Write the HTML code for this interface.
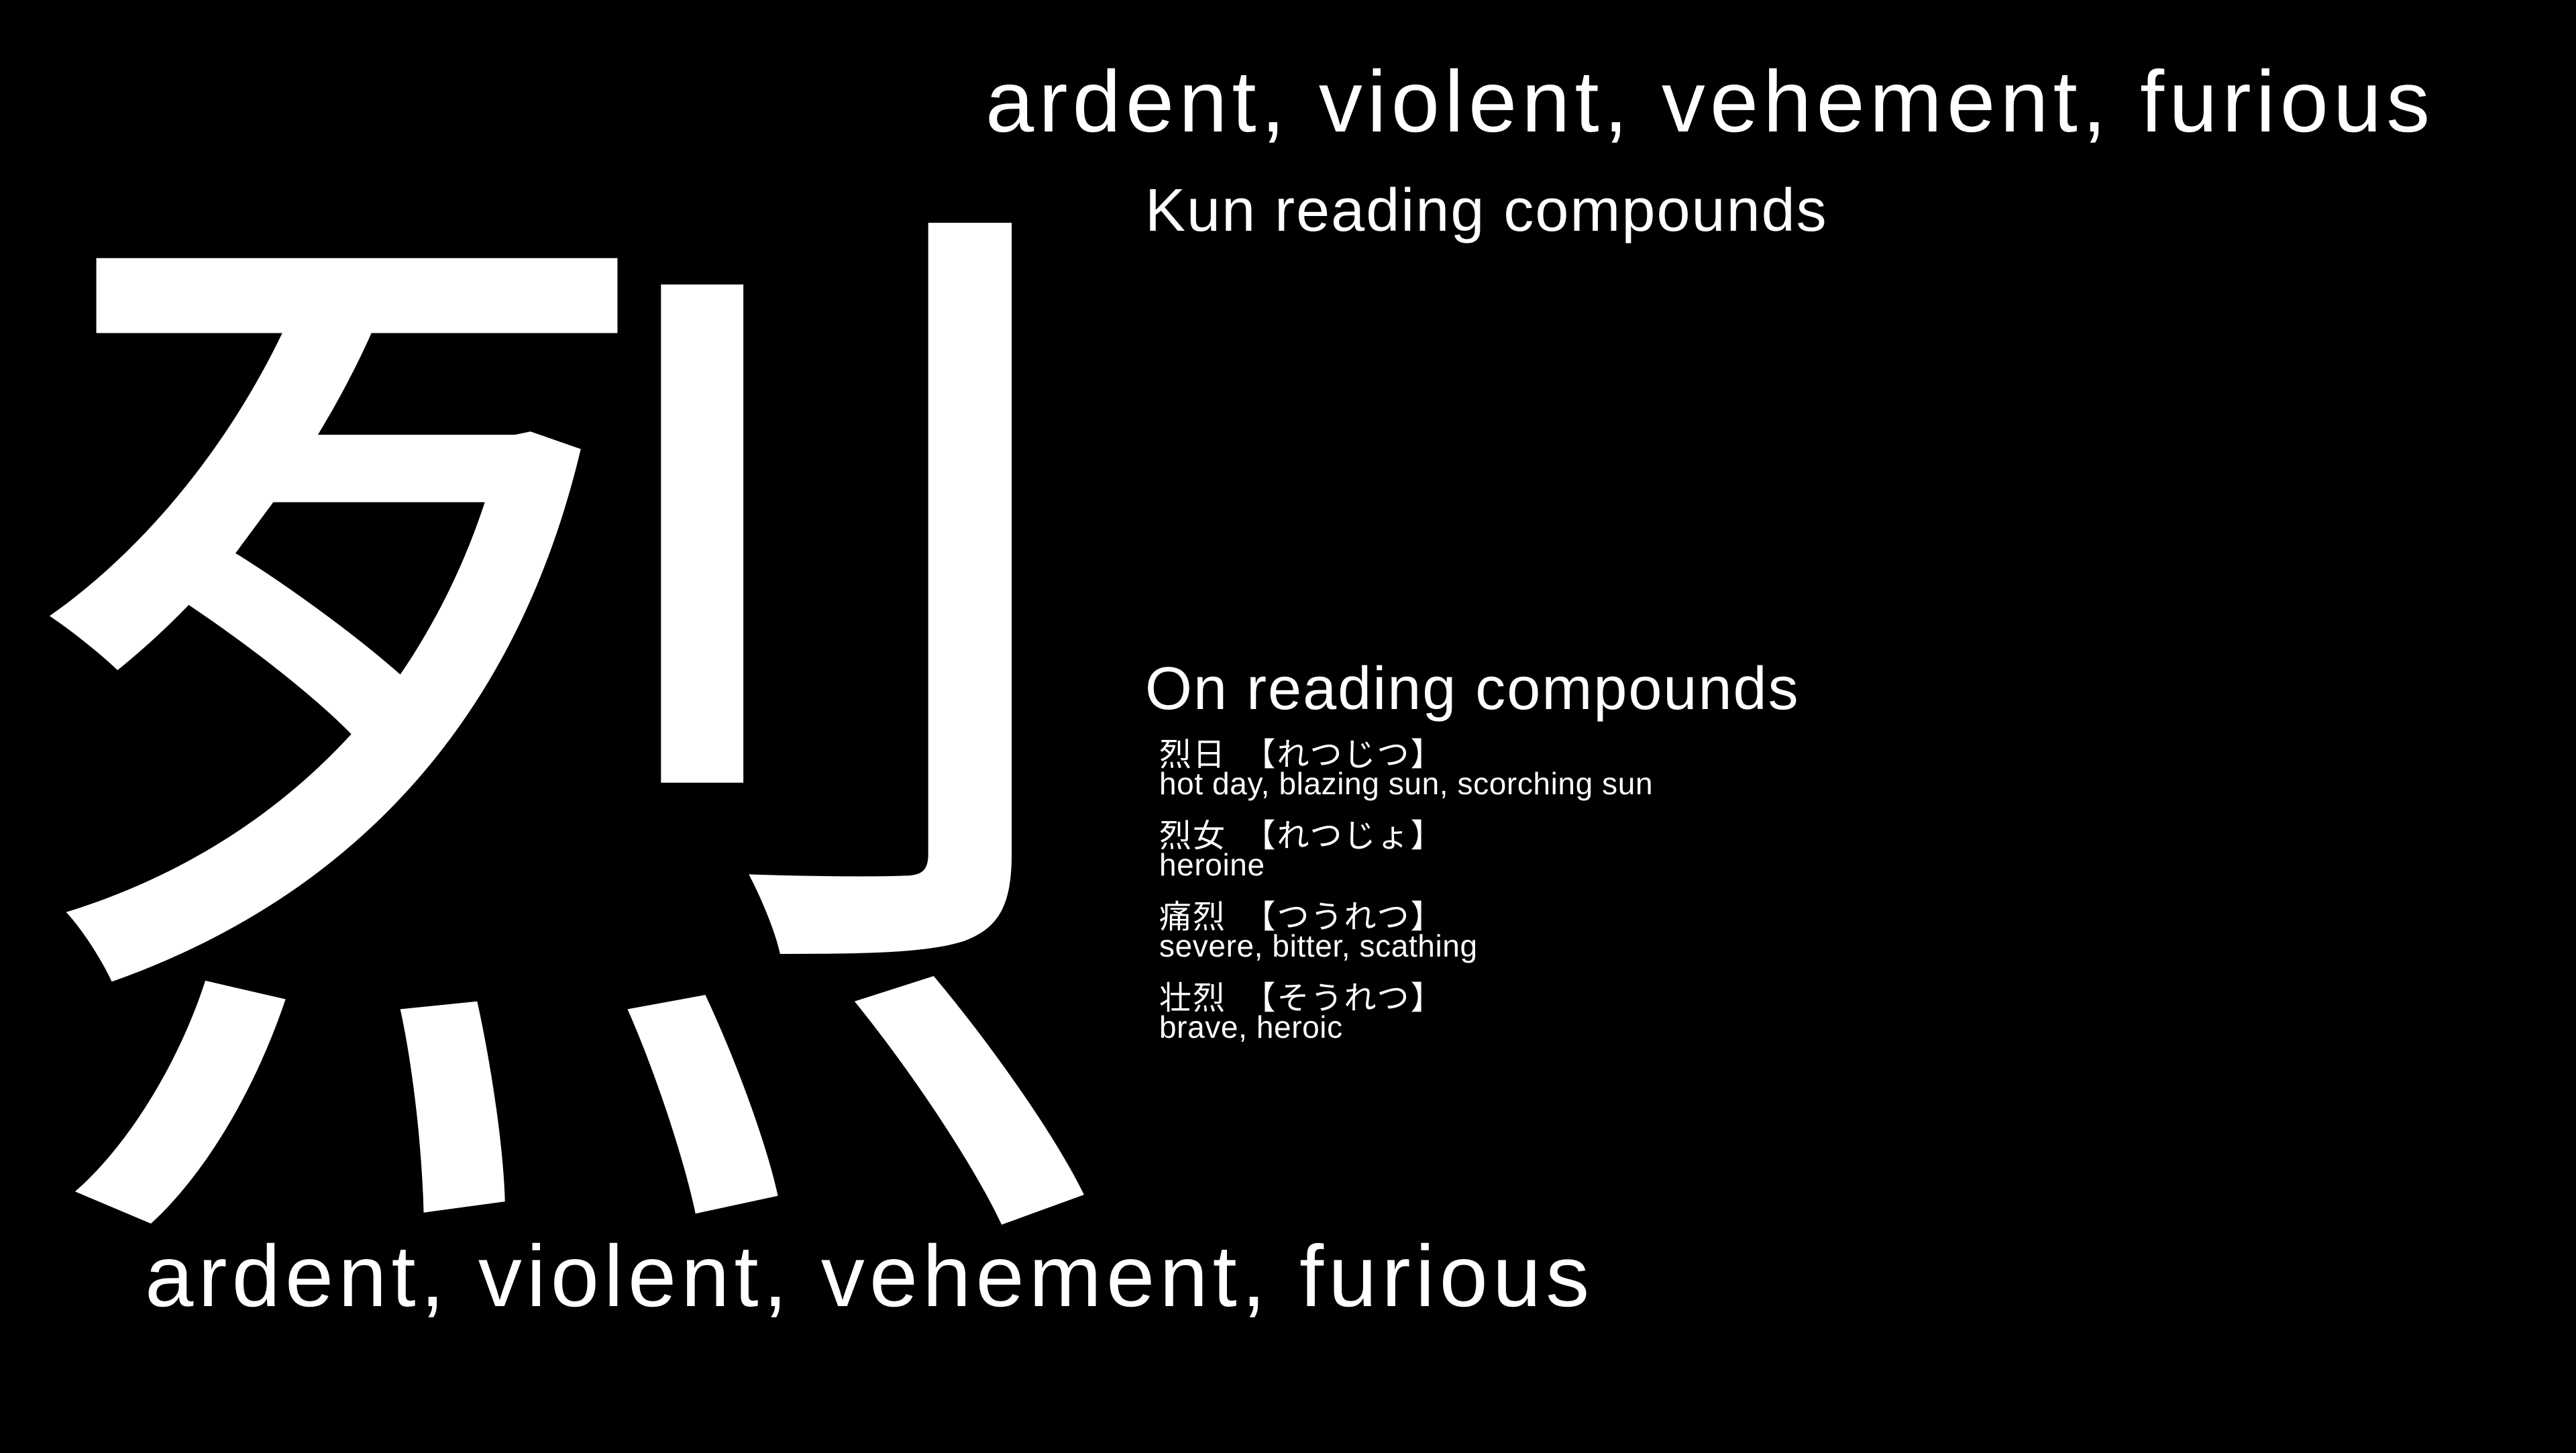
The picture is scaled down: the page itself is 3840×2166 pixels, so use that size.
<!DOCTYPE html>
<html><head><meta charset="utf-8"><style>
html,body{margin:0;padding:0;background:#000;}
body{width:3840px;height:2160px;position:relative;overflow:hidden;color:#fff;font-family:"Liberation Sans","Noto Sans CJK JP",sans-serif;}
div{position:absolute;white-space:nowrap;line-height:1;}
.big{font-size:130px;letter-spacing:7px;}
.hd{font-size:90px;letter-spacing:2px;}
.jp{font-family:"Noto Sans CJK JP",sans-serif;font-size:48px;letter-spacing:2px;}
.en{font-size:46px;letter-spacing:0.6px;}
</style></head><body>
<div style="left:24px;top:150px;font-family:'Noto Sans CJK JP',sans-serif;font-size:1660px;transform:scale(1,0.992);transform-origin:0 0;">烈</div>
<div class="big" style="left:1469px;top:86px;">ardent, violent, vehement, furious</div>
<div class="hd" style="left:1707px;top:269px;">Kun reading compounds</div>
<div class="hd" style="left:1707px;top:982px;">On reading compounds</div>
<div class="jp" style="left:1728px;top:1096px;">烈日&nbsp;&nbsp;【れつじつ】</div>
<div class="en" style="left:1728px;top:1145px;">hot day, blazing sun, scorching sun</div>
<div class="jp" style="left:1728px;top:1217px;">烈女&nbsp;&nbsp;【れつじょ】</div>
<div class="en" style="left:1728px;top:1266px;">heroine</div>
<div class="jp" style="left:1728px;top:1338px;">痛烈&nbsp;&nbsp;【つうれつ】</div>
<div class="en" style="left:1728px;top:1387px;">severe, bitter, scathing</div>
<div class="jp" style="left:1728px;top:1459px;">壮烈&nbsp;&nbsp;【そうれつ】</div>
<div class="en" style="left:1728px;top:1508px;">brave, heroic</div>
<div class="big" style="left:216px;top:1837px;">ardent, violent, vehement, furious</div>
</body></html>
